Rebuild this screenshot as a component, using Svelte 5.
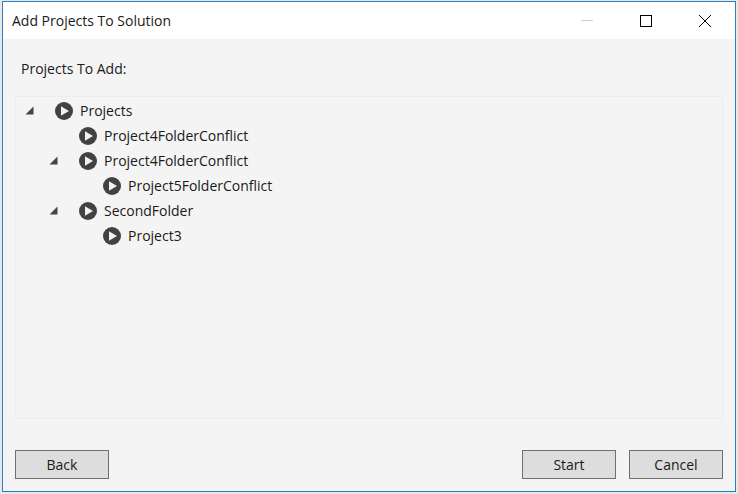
<script>
  const rows = [
    { label: 'Projects', depth: 0, arrow: true },
    { label: 'Project4FolderConflict', depth: 1, arrow: false },
    { label: 'Project4FolderConflict', depth: 1, arrow: true },
    { label: 'Project5FolderConflict', depth: 2, arrow: false },
    { label: 'SecondFolder', depth: 1, arrow: true },
    { label: 'Project3', depth: 2, arrow: false }
  ];
</script>

<div class="screen">
  <div class="window">
    <header class="titlebar">
      <span class="title">Add Projects To Solution</span>
      <div class="controls">
        <svg class="ctl min" width="12" height="2" viewBox="0 0 12 2"><rect width="12" height="1" y="0" fill="#cccccc" /></svg>
        <svg class="ctl max" width="12" height="12" viewBox="0 0 12 12"><rect x="0.5" y="0.5" width="11" height="11" fill="none" stroke="#000" /></svg>
        <svg class="ctl close" width="12" height="12" viewBox="0 0 12 12"><path d="M0 0L12 12M12 0L0 12" stroke="#000" stroke-width="1" /></svg>
      </div>
    </header>
    <main class="body">
      <div class="heading">Projects To Add:</div>
      <div class="tree">
        {#each rows as row}
          <div class="row" style="--depth: {row.depth}">
            <span class="arrow-slot">
              {#if row.arrow}
                <svg width="9" height="9" viewBox="0 0 9 9"><path d="M8.5 0.5V8.5H0.5Z" fill="#444444" /></svg>
              {/if}
            </span>
            <svg class="icon" width="18" height="18" viewBox="0 0 18 18">
              <circle cx="9" cy="9" r="9" fill="#424242" />
              <path d="M6 4.2L14 9L6 13.8Z" fill="#f2f2f2" />
            </svg>
            <span class="label">{row.label}</span>
          </div>
        {/each}
      </div>
      <footer class="footer">
        <button>Back</button>
        <div class="right">
          <button>Start</button>
          <button>Cancel</button>
        </div>
      </footer>
    </main>
  </div>
</div>

<style>
  :global(body) {
    margin: 0;
    background: #e8e8e8;
  }
  .screen {
    width: 738px;
    height: 494px;
    padding: 1px 2px 2px 2px;
    box-sizing: border-box;
    overflow: hidden;
    font-family: "Open Sans", "Noto Sans", sans-serif;
    color: #1a1a1a;
  }
  .window {
    height: 100%;
    box-sizing: border-box;
    border: 1px solid #2b7fc9;
    display: flex;
    flex-direction: column;
    background: #f4f4f4;
  }
  .titlebar {
    height: 37px;
    flex: none;
    background: #fff;
    display: flex;
    align-items: center;
    justify-content: space-between;
    padding-left: 9px;
  }
  .title {
    font-size: 14px;
  }
  .controls {
    display: flex;
    align-items: center;
  }
  .ctl {
    display: block;
  }
  .min { margin-right: 47px; }
  .max { margin-right: 47px; }
  .close { margin-right: 24px; }
  .body {
    flex: 1;
    min-height: 0;
    display: flex;
    flex-direction: column;
    padding: 0 12px;
  }
  .heading {
    font-size: 14px;
    margin: 20px 0 0 6px;
    line-height: 19px;
    height: 19px;
  }
  .tree {
    margin-top: 18px;
    height: 323px;
    box-sizing: border-box;
    border: 1px solid #ececec;
    padding-top: 1px;
  }
  .row {
    display: flex;
    align-items: center;
    height: 25px;
    padding-left: calc(var(--depth) * 24px);
    font-size: 14px;
  }
  .arrow-slot {
    width: 39px;
    flex: none;
    display: flex;
    padding-left: 9px;
    box-sizing: border-box;
  }
  .arrow-slot svg { display: block; }
  .icon { flex: none; }
  .label {
    margin-left: 7px;
  }
  .footer {
    margin-top: 31px;
    display: flex;
    justify-content: space-between;
  }
  .right {
    display: flex;
    gap: 13px;
  }
  button {
    width: 94px;
    height: 29px;
    box-sizing: border-box;
    background: #dddddd;
    border: 1px solid #707070;
    border-radius: 0;
    font: inherit;
    font-size: 14px;
    color: #1a1a1a;
    padding: 0;
  }
</style>
